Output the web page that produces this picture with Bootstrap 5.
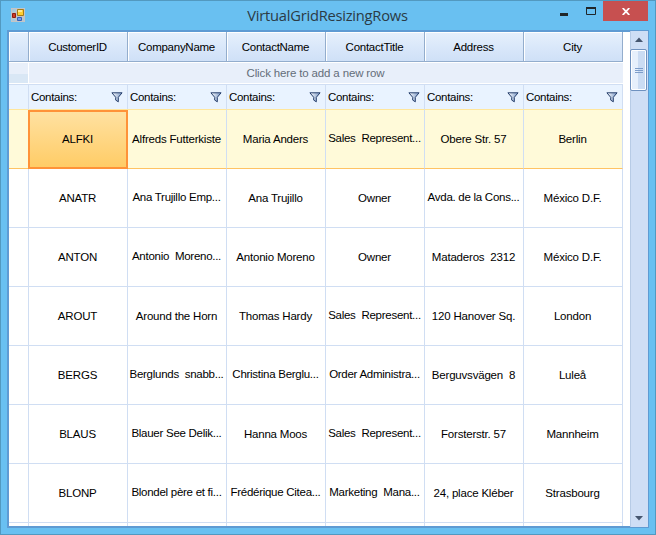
<!DOCTYPE html>
<html lang="en">
<head>
<meta charset="utf-8">
<meta name="viewport" content="width=device-width, initial-scale=1">
<title>VirtualGridResizingRows</title>
<link href="https://cdn.jsdelivr.net/npm/bootstrap@5.3.0/dist/css/bootstrap.min.css" rel="stylesheet">
<style>
body{font:11.5px/14px "Liberation Sans",Arial,sans-serif;color:#000;background:#69c0f0}
.win{width:656px;height:535px;background:#69c0f1;border:1px solid #5299c0;padding:0 6px 6px}
.titlebar{height:29px}
.app-icon{margin:7px 0 0 4px}
.caption{font:14.7px/20px "Open Sans","Noto Sans",sans-serif;color:#2b3b45;letter-spacing:-.24px;padding-top:4px;margin-left:72px}
.closebtn{width:45px;height:20px;background:#c75050;margin-right:1px}
.client{height:498px;border:2px solid #5f9bd3;border-right-width:1px;background:#fff;letter-spacing:-.2px}
.gridview{width:614px;height:494px}
.line{display:grid;grid-template-columns:20px repeat(6,99px);flex:none;white-space:pre}
.line>div{display:flex;align-items:center;justify-content:center;border-right:1px solid #d0def3;border-bottom:1px solid #d0def3;overflow:hidden;padding-right:1px}
.heads{height:30px}
.heads>div{border-color:#93adcd;background:linear-gradient(#e7f0fc,#dae8fa 50%,#cfe0f7);box-shadow:inset 1px 1px #fff;padding-top:1px;letter-spacing:-.26px}
.line.addrow{height:22px;grid-template-columns:20px 594px;color:#646d79}
.line.addrow>div{background:#e8effa;border-bottom:1px solid #fff;border-top:1px solid #fff}
.line.addrow>div:first-child{background:linear-gradient(#e8effa 55%,#d9e7f5 56%);border-right-color:#fff}
.line.addrow>div:last-child{border-right:0;padding-right:21px;letter-spacing:-.15px}
.filters{height:25px}
.line.filters>div{background:#e9f3ff;border-top:1px solid #d0def3;border-bottom:0;justify-content:space-between;padding:0 4px 0 2px;letter-spacing:-.3px}
.rec{height:59px}
.rec>.cut{padding-bottom:2px;letter-spacing:-.27px}
.line.sel{height:60px;background:#ffe69b}
.line.sel>div{background:#fffad9;border-bottom-color:#ffc363;border-top:1px solid #ffe69b}
.line.sel>div.active{background:linear-gradient(#ffe1a1,#ffcc66);border:2px solid #ff9238;margin:1px 0 0 -1px;padding-bottom:1px}
.scroll{width:18px;background:#cfdef5;border-left:1px solid #b7cbe6;margin-top:-1px;margin-bottom:-1px}
.thumb{width:17px;height:42px;margin:0 0 0 -1px;border:1px solid #6f91bf;border-radius:2px;box-shadow:inset 0 0 0 1px #fff;background:linear-gradient(90deg,#e7f0fc 45%,#cbdcf3 46%);align-self:flex-start}
.scroll>svg{margin-right:2px}
</style>
</head>
<body>
<svg width="0" height="0" class="position-absolute">
<defs><linearGradient id="fg"><stop stop-color="#fff"/><stop offset="1" stop-color="#7796c4"/></linearGradient>
<symbol id="funnel" viewBox="0 0 12 11"><path d="M.9.8H11.1L7.300 5.300V9.800L4.700 8.100V5.300Z" fill="url(#fg)" stroke="#263f6c"/></symbol></defs>
</svg>
<div class="win d-flex flex-column overflow-hidden">
<header class="titlebar d-flex align-items-start justify-content-between flex-shrink-0">
<svg class="app-icon" width="14" height="14" viewBox="0 0 14 14"><path d="M0 0h14v14H0z" fill="#c4c5c7"/><path d="M1 1h4v3H1zM1 11h3v2H1zM12 10h1v3h-1z" fill="#a8c9dc"/><path d="M6.500 1.500h6v6h-6z" fill="#ffcf31" stroke="#a77c16"/><path d="M7 2h4v2H7z" fill="#ffe891"/><path d="M1.500 5.500h3v4h-3z" fill="#ce3a24" stroke="#8d1c13"/><path d="M6.500 9.500h4v3h-4z" fill="#729ced" stroke="#3462b8"/></svg>
<div class="caption flex-grow-1 text-center">VirtualGridResizingRows</div>
<div class="d-flex">
<svg width="45" height="20"><path d="M2 12h8v3H2z" fill="#202629"/><path d="M28.500 7.500h9v6h-9z" fill="none" stroke="#202629"/><path d="M28 6h10v2H28z" fill="#202629"/></svg>
<div class="closebtn d-flex align-items-center justify-content-center"><svg width="8" height="7" viewBox="0 0 8 7"><path d="M.7 0 7.300 7M7.300 0 .7 7" stroke="#fff" stroke-width="1.800"/></svg></div>
</div>
</header>
<main class="client d-flex justify-content-between">
<div class="gridview d-flex flex-column overflow-hidden">
<div class="line heads"><div></div><div>CustomerID</div><div>CompanyName</div><div>ContactName</div><div>ContactTitle</div><div>Address</div><div>City</div></div>
<div class="line addrow"><div></div><div>Click here to add a new row</div></div>
<div class="line filters"><div></div>
<div>Contains:<svg width="12" height="11"><use href="#funnel"/></svg></div>
<div>Contains:<svg width="12" height="11"><use href="#funnel"/></svg></div>
<div>Contains:<svg width="12" height="11"><use href="#funnel"/></svg></div>
<div>Contains:<svg width="12" height="11"><use href="#funnel"/></svg></div>
<div>Contains:<svg width="12" height="11"><use href="#funnel"/></svg></div>
<div>Contains:<svg width="12" height="11"><use href="#funnel"/></svg></div></div>
<div class="line rec sel"><div></div><div class="active">ALFKI</div><div>Alfreds Futterkiste</div><div>Maria Anders</div><div class="cut">Sales  Represent...</div><div>Obere Str. 57</div><div>Berlin</div></div>
<div class="line rec"><div></div><div>ANATR</div><div class="cut">Ana Trujillo Emp...</div><div>Ana Trujillo</div><div>Owner</div><div class="cut">Avda. de la Cons...</div><div>México D.F.</div></div>
<div class="line rec"><div></div><div>ANTON</div><div class="cut">Antonio  Moreno...</div><div>Antonio Moreno</div><div>Owner</div><div>Mataderos  2312</div><div>México D.F.</div></div>
<div class="line rec"><div></div><div>AROUT</div><div>Around the Horn</div><div>Thomas Hardy</div><div class="cut">Sales  Represent...</div><div>120 Hanover Sq.</div><div>London</div></div>
<div class="line rec"><div></div><div>BERGS</div><div class="cut">Berglunds  snabb...</div><div class="cut">Christina Berglu...</div><div class="cut">Order Administra...</div><div>Berguvsvägen  8</div><div>Luleå</div></div>
<div class="line rec"><div></div><div>BLAUS</div><div class="cut">Blauer See Delik...</div><div>Hanna Moos</div><div class="cut">Sales  Represent...</div><div>Forsterstr. 57</div><div>Mannheim</div></div>
<div class="line rec"><div></div><div>BLONP</div><div class="cut">Blondel père et fi...</div><div class="cut">Frédérique Citea...</div><div class="cut">Marketing  Mana...</div><div>24, place Kléber</div><div>Strasbourg</div></div>
<div class="line rec"><div></div><div></div><div></div><div></div><div></div><div></div><div></div></div>
</div>
<div class="scroll d-flex flex-column align-items-center">
<svg width="16" height="18"><path d="M4 11 8 6.500 12 11Z" fill="#46566f"/></svg>
<div class="thumb d-flex align-items-center justify-content-center"><svg width="8" height="7"><path d="M0 1.500h8M0 3.500h8M0 5.500h8" stroke="#7d9dca"/></svg></div>
<svg class="mt-auto" width="16" height="18"><path d="M4 7 8 11.500 12 7Z" fill="#46566f"/></svg>
</div>
</main>
</div>
<script src="https://cdn.jsdelivr.net/npm/bootstrap@5.3.0/dist/js/bootstrap.bundle.min.js"></script>
</body>
</html>
